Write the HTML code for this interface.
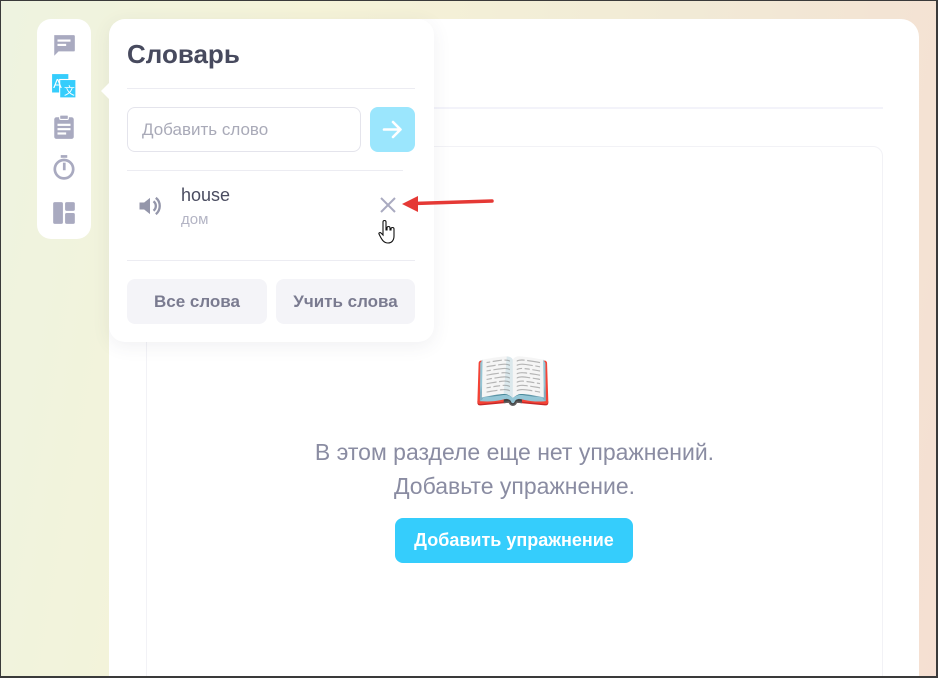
<!DOCTYPE html>
<html><head><meta charset="utf-8"><style>
*{box-sizing:border-box;margin:0;padding:0}
html,body{width:938px;height:678px;overflow:hidden}
body{position:relative;font-family:"Liberation Sans","DejaVu Sans",sans-serif;
background:linear-gradient(100deg,#eef3e0 0%,#f5f3d8 30%,#f1ead6 65%,#f5dfd2 100%);}
.frame{position:absolute;left:0;top:0;width:938px;height:678px;border:1px solid #3a3a3a;border-right-width:2px;border-bottom-width:2px;z-index:20;pointer-events:none}
.main{position:absolute;left:109px;top:19px;width:810px;height:680px;background:#fff;border-radius:18px}
.sep{position:absolute;left:146px;top:107px;width:737px;height:2px;background:#f3f3fa}
.box{position:absolute;left:146px;top:146px;width:737px;height:560px;border:1px solid #f2f2f6;border-radius:10px}
.side{position:absolute;left:37px;top:19px;width:54px;height:220px;background:#fff;border-radius:14px}
.ic{position:absolute;left:14px}
.pop{position:absolute;left:109px;top:19px;width:325px;height:323px;background:#fff;border-radius:16px;box-shadow:0 4px 18px rgba(60,60,90,.08);z-index:5}
.pop:before{content:"";position:absolute;left:-8px;top:64px;border:8px solid transparent;border-right-color:#fff;border-left:0}
h1{position:absolute;left:18px;top:20px;font-size:26px;font-weight:bold;color:#474a5e}
.hr{position:absolute;left:18px;width:288px;height:1px;background:#ececf2}
.inp{position:absolute;left:18px;top:88px;width:234px;height:45px;border:1px solid #e4e4ec;border-radius:8px;font-size:17px;color:#a9aab8;padding:12px 0 0 14px}
.go{position:absolute;left:261px;top:88px;width:45px;height:45px;border-radius:8px;background:#9be6fd}
.btn{position:absolute;top:260px;height:45px;border-radius:8px;background:#f4f4f8;color:#7a7b90;font-weight:bold;font-size:17px;text-align:center;line-height:45px}
.msg{position:absolute;left:146px;width:737px;text-align:center;color:#8a8ca2;font-size:23px}
.add{position:absolute;left:395px;top:518px;width:238px;height:45px;border-radius:8px;background:#35cdfc;color:#fff;font-weight:bold;font-size:18px;text-align:center;line-height:45px}
</style></head><body>
<div class="main"></div>
<div class="sep"></div>
<div class="box"></div>
<div class="side">
<svg class="ic" style="top:14px" width="26" height="26" viewBox="0 0 24 24"><path d="M3 2h18a1 1 0 0 1 1 1v13a1 1 0 0 1-1 1H7l-4 4z" fill="#a9aac0"/><rect x="6" y="6" width="12" height="2" fill="#fff"/><rect x="6" y="10" width="8" height="2" fill="#fff"/></svg>
<svg class="ic" style="top:54px" width="26" height="26" viewBox="0 0 24 24"><rect x="1" y="1" width="15" height="17" fill="#35cdfc"/><rect x="8" y="6" width="15" height="17" fill="#35cdfc" stroke="#fff" stroke-width="1"/><text x="2" y="14" font-size="12" fill="#fff" font-family="Liberation Sans">A</text><text x="12" y="20" font-size="10" fill="#fff" font-family="Liberation Sans">文</text></svg>
<svg class="ic" style="top:95px" width="26" height="26" viewBox="0 0 24 24"><rect x="3" y="3" width="18" height="20" rx="2" fill="#a9aac0"/><rect x="8" y="1" width="8" height="4" rx="1" fill="#a9aac0" stroke="#fff"/><rect x="6" y="9" width="12" height="2" fill="#fff"/><rect x="6" y="13" width="12" height="2" fill="#fff"/><rect x="6" y="17" width="8" height="2" fill="#fff"/></svg>
<svg class="ic" style="top:135px" width="26" height="26" viewBox="0 0 24 24"><circle cx="12" cy="14" r="8.5" fill="none" stroke="#a9aac0" stroke-width="2.5"/><rect x="9" y="1" width="6" height="2.5" fill="#a9aac0"/><rect x="11" y="8" width="2.5" height="7" fill="#a9aac0"/></svg>
<svg class="ic" style="top:181px" width="26" height="26" viewBox="0 0 24 24"><rect x="2" y="2" width="9" height="20" rx="1.5" fill="#a9aac0"/><rect x="13" y="2" width="9" height="8" rx="1.5" fill="#a9aac0"/><rect x="13" y="12" width="9" height="10" rx="1.5" fill="#a9aac0"/></svg>
</div>
<div class="pop">
<h1>Словарь</h1>
<div class="hr" style="top:69px"></div>
<div class="inp">Добавить слово</div>
<div class="go"><svg width="45" height="45" viewBox="0 0 45 45"><path d="M14 22.5h16M23 15l7.5 7.5L23 30" fill="none" stroke="#fff" stroke-width="2.6" stroke-linecap="round" stroke-linejoin="round"/></svg></div>
<div class="hr" style="top:151px;width:276px"></div>
<svg style="position:absolute;left:27px;top:173px" width="28" height="28" viewBox="0 0 24 24"><path d="M3 9h4l5-4v14l-5-4H3z" fill="#9496aa"/><path d="M15 8a5 5 0 0 1 0 8M17 5a9 9 0 0 1 0 14" fill="none" stroke="#9496aa" stroke-width="2"/></svg>
<div style="position:absolute;left:72px;top:166px;font-size:18px;color:#4a4c60">house</div>
<div style="position:absolute;left:72px;top:192px;font-size:15px;color:#b3b4c4">дом</div>
<svg style="position:absolute;left:270px;top:177px" width="18" height="18" viewBox="0 0 18 18"><path d="M2 2l14 14M16 2L2 16" stroke="#a9aac0" stroke-width="2"/></svg>
<svg style="position:absolute;left:269px;top:200px" width="20" height="26" viewBox="0 0 20 26"><path d="M5 3a1.5 1.5 0 0 1 3 0v8h1V9a1.5 1.5 0 0 1 3 0v2h1v-1a1.5 1.5 0 0 1 3 0v7c0 4-2 7-6 7s-6-3-8-7l-1-2c-.5-1 1-2 2-1l2 2z" fill="#fff" stroke="#111" stroke-width="1.1"/></svg>
<div class="hr" style="top:241px"></div>
<div class="btn" style="left:18px;width:140px">Все слова</div>
<div class="btn" style="left:167px;width:139px">Учить слова</div>
</div>
<svg style="position:absolute;left:400px;top:190px;z-index:6" width="100" height="28" viewBox="0 0 100 28"><path d="M14 13.5L92 11" stroke="#e53935" stroke-width="3.5" stroke-linecap="round"/><path d="M2 14l16-8v16z" fill="#e53935"/></svg>
<div style="position:absolute;left:473px;top:342px;font-size:64px;line-height:80px;font-family:'Noto Color Emoji','DejaVu Sans',sans-serif">📖</div>
<div class="msg" style="top:439px">В этом разделе еще нет упражнений.</div>
<div class="msg" style="top:473px">Добавьте упражнение.</div>
<div class="add">Добавить упражнение</div>
<div class="frame"></div>
</body></html>
